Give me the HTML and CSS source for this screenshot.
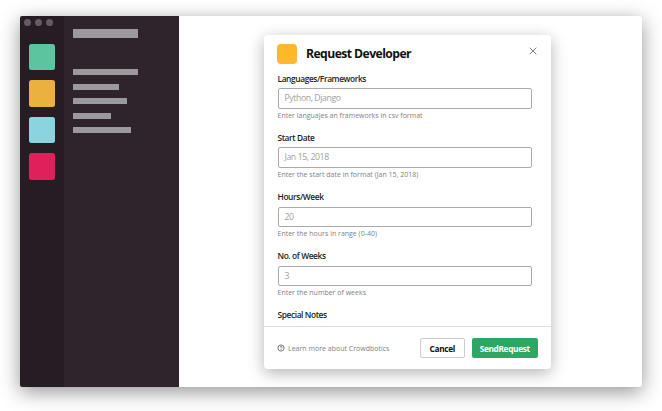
FILE: index.html
```html
<!DOCTYPE html>
<html lang="en">
<head>
<meta charset="utf-8">
<title>Request Developer</title>
<link rel="stylesheet" href="styles.css">
</head>
<body>
<div class="window">
  <nav class="rail">
    <div class="lights"><i></i><i></i><i></i></div>
    <div class="team green"></div>
    <div class="team amber"></div>
    <div class="team sky"></div>
    <div class="team rose"></div>
  </nav>
  <aside class="sidebar">
    <div class="bar heading"></div>
    <div class="bar w65"></div>
    <div class="bar w46"></div>
    <div class="bar w54"></div>
    <div class="bar w38"></div>
    <div class="bar w58"></div>
  </aside>
  <main class="stage">
    <section class="dialog">
      <header class="head">
        <span class="logo"></span>
        <h1>Request Developer</h1>
        <svg class="close" viewBox="0 0 8 8"><path d="M.7.7l6.6 6.6M7.3.7L.7 7.3"/></svg>
      </header>
      <div class="fields">
        <div class="field"><label>Languages/Frameworks</label><div class="input">Python, Django</div><p>Enter languajes an frameworks in csv format</p></div>
        <div class="field"><label>Start Date</label><div class="input">Jan 15, 2018</div><p>Enter the start date in format (Jan 15, 2018)</p></div>
        <div class="field"><label>Hours/Week</label><div class="input">20</div><p>Enter the hours in range (0-40)</p></div>
        <div class="field"><label>No. of Weeks</label><div class="input">3</div><p>Enter the number of weeks</p></div>
        <div class="field"><label>Special Notes</label></div>
      </div>
      <footer class="foot">
        <svg class="help" viewBox="0 0 8 8"><circle cx="4" cy="4" r="3.1"/><path d="M3 3.3c0-1.3 2-1.3 2 0 0 .7-1 .6-1 1.3M4 5.2v.7"/></svg>
        <span class="learn">Learn more about Crowdbotics</span>
        <button class="btn cancel">Cancel</button>
        <button class="btn send">SendRequest</button>
      </footer>
    </section>
  </main>
</div>
</body>
</html>
```
FILE: styles.css
```css
* { box-sizing: border-box; }
body {
  margin: 0;
  padding: 16px 20px 0;
  height: 411px;
  overflow: hidden;
  background: #fff;
  font-family: "Open Sans", "Noto Sans", sans-serif;
}
.window {
  display: flex;
  width: 622px;
  height: 371px;
  border-radius: 2px;
  background: #fff;
  box-shadow: 0 5px 20px rgba(0, 0, 0, .42), 0 0 1px rgba(0, 0, 0, .15);
}
.rail {
  width: 44px;
  padding: 3px 0 0 9px;
  background: #261d24;
  border-radius: 2px 0 0 2px;
}
.lights { display: flex; gap: 4px; margin: 0 0 17.5px -5px; }
.lights i { width: 7px; height: 7px; border-radius: 50%; background: #645c62; }
.team { width: 26px; height: 26.5px; margin-bottom: 10px; border-radius: 2.5px; }
.green { background: #5dc4a0; }
.amber { background: #ebb13e; }
.sky { background: #8bd3df; }
.rose { background: #df205b; }
.sidebar {
  width: 115px;
  padding: 13px 0 0 9.3px;
  background: #2f242c;
}
.bar { height: 6px; margin-bottom: 8.4px; background: #9b999b; }
.heading { width: 64.7px; height: 9px; margin-bottom: 31.4px; }
.w65 { width: 64.7px; }
.w46 { width: 46px; }
.w54 { width: 54px; }
.w38 { width: 37.5px; }
.w58 { width: 58px; }
.stage { flex: 1; padding: 19px 0 0 85px; }
.dialog {
  display: flex;
  flex-direction: column;
  width: 287.4px;
  height: 334.4px;
  border-radius: 4px;
  background: #fff;
  box-shadow: 0 4px 16px rgba(0, 0, 0, .3);
}
.head { display: flex; align-items: flex-start; height: 36px; padding: 9px 14.4px 0 13px; }
.logo { width: 20px; height: 19.5px; border-radius: 4px; background: #fdb82d; }
h1 {
  margin: 1px 0 0 9px;
  font-size: 12.2px;
  line-height: 17px;
  font-weight: 700;
  letter-spacing: -.57px;
  color: #111;
}
.close { width: 8px; height: 8px; margin: 3px 0 0 auto; fill: none; stroke: #6f6f6f; stroke-width: .9; }
.fields { height: 255px; padding-left: 13.5px; overflow: hidden; }
.field { height: 59.1px; }
label {
  display: block;
  height: 17.4px;
  font-size: 8.4px;
  line-height: 15px;
  font-weight: 600;
  letter-spacing: -.4px;
  color: #1d1c1d;
}
.input {
  width: 254px;
  height: 20.4px;
  padding-left: 6px;
  border: 1px solid #aaa;
  border-radius: 2px;
  font-size: 8.7px;
  line-height: 19px;
  letter-spacing: -.4px;
  color: #a0a0a0;
}
p { margin: 2.3px 0 0; font-size: 7px; line-height: 10px; color: #7f7f7f; }
.foot {
  display: flex;
  flex: 1;
  align-items: flex-start;
  padding: 11px 13.4px 0 13px;
  border-top: 1px solid #dedede;
}
.help { width: 8px; height: 8px; margin-top: 6px; fill: none; stroke: #6b6b6b; stroke-width: .9; }
.learn { margin: 6px auto 0 3px; font-size: 7px; line-height: 10px; color: #7f7f7f; white-space: nowrap; }
.btn {
  height: 20px;
  padding: 1px 0 0;
  border-radius: 2px;
  font-family: inherit;
  font-size: 8.3px;
  line-height: 18px;
  font-weight: 700;
  letter-spacing: -.35px;
}
.cancel { width: 44.5px; border: 1px solid #ccc; background: #fff; color: #111; }
.send { width: 66.5px; margin-left: 7px; border: 0; background: #2ea664; color: #fff; }
```
